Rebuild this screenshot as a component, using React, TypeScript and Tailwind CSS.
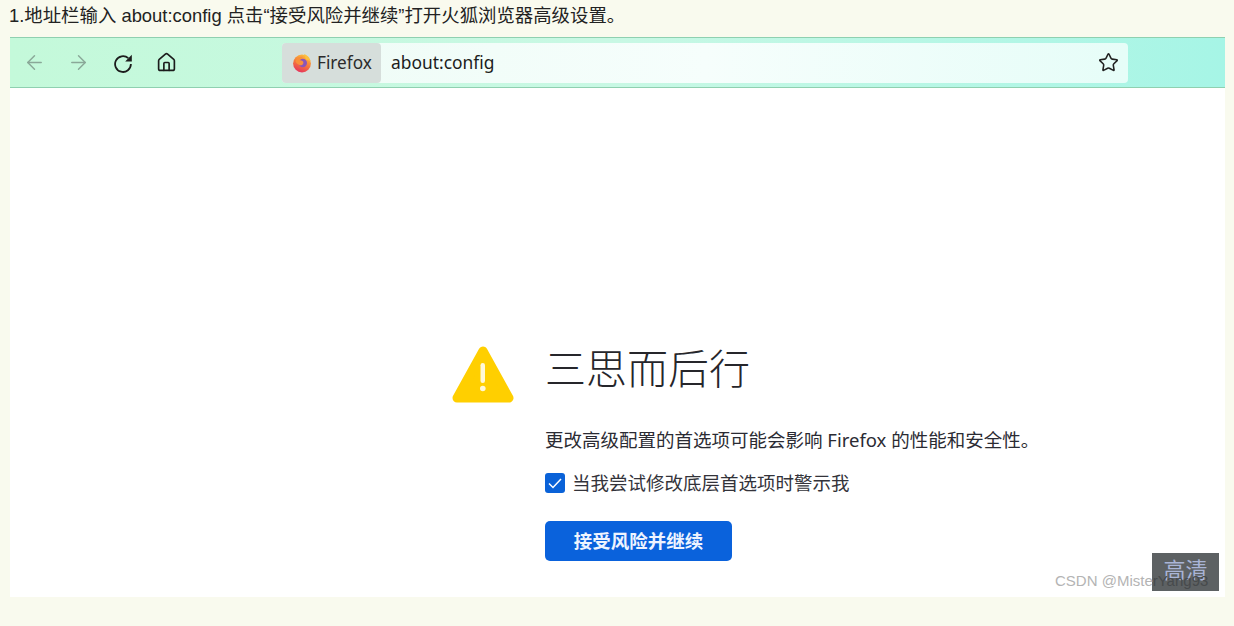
import { ArrowLeft, ArrowRight, Home, Star } from 'lucide-react';

function FirefoxLogo() {
    return (
        <svg width="20" height="20" viewBox="0 0 20 20">
            <defs>
                <linearGradient id="ffOuter" x1="0.7" y1="0" x2="0.3" y2="1">
                    <stop offset="0" stopColor="#fcc03f" />
                    <stop offset="0.5" stopColor="#f5793a" />
                    <stop offset="1" stopColor="#e5305f" />
                </linearGradient>
            </defs>
            <circle cx="10" cy="10.500" r="8.900" fill="url(#ffOuter)" />
            <path d="M12 1c3 1 5.500 3.500 6.500 7L14 6.500z" fill="#fcc03f" />
            <circle cx="10.800" cy="10" r="4.200" fill="#8a55b8" />
            <path d="M3.500 8c1.500-3.500 5-5 8-4-2 .6-3.200 1.800-3.400 3.200 2 0 3.500 1 3.300 2.800-.3 2-2.800 3-4.500 1.800C5.200 11 4 9.800 3.500 8z" fill="#f98f3a" />
        </svg>
    );
}

function ReloadIcon() {
    return (
        <svg width="20" height="20" viewBox="0 0 20 20" fill="none" className="ml-[23px]">
            <path d="M15.300 5.200 A7.900 7.900 0 1 0 17.900 11" stroke="#1c1c1c" strokeWidth="1.800" />
            <path d="M18.800 1.800 V8.400 H12.200 Z" fill="#1c1c1c" />
        </svg>
    );
}

export default function App() {
    return (
        <div className="relative w-[1234px] h-[626px] overflow-hidden bg-[#f9faee] font-['Liberation_Sans','Noto_Sans_CJK_SC',sans-serif]">
            <div className="h-[37px] pl-[9px] pt-[3px] text-[18.400px] leading-[26px] text-[#222222]">
                1.地址栏输入 about:config 点击“接受风险并继续”打开火狐浏览器高级设置。
            </div>

            <div className="ml-[10px] w-[1215px] h-[560px] flex flex-col bg-white font-['Noto_Sans','Noto_Sans_CJK_SC',sans-serif]">
                {/* Toolbar */}
                <div className="h-[51px] flex items-center border-y border-[#8fd0b0] bg-gradient-to-r from-[#c4f9da] via-[#c8f8e4] to-[#a6f5e6]">
                    <div className="w-[272px] flex items-center pl-[13px]">
                        <ArrowLeft size={23} strokeWidth={1.5} className="text-[#8aa898]" />
                        <ArrowRight size={23} strokeWidth={1.5} className="ml-[21px] text-[#8aa898]" />
                        <ReloadIcon />
                        <Home size={21} strokeWidth={1.9} className="ml-[23px] text-[#1c1c1c]" />
                    </div>
                    <div className="w-[846px] h-[40px] flex items-center rounded-[4px] bg-gradient-to-r from-[#eefcf6] via-[#f6fefc] to-[#e6fdf8]">
                        <div className="w-[99px] h-full flex items-center rounded-[4px] bg-[#d6dedb] pl-[10px]">
                            <FirefoxLogo />
                            <span className="ml-[5px] text-[17.200px] text-[#2b2b2b]">Firefox</span>
                        </div>
                        <span className="ml-[10px] text-[17.400px] text-[#1c1c1c]">about:config</span>
                        <Star size={21} strokeWidth={1.8} className="ml-auto mr-[9px] text-[#222222]" />
                    </div>
                </div>

                {/* Warning */}
                <div className="flex pl-[442px] pt-[257px]">
                    <svg width="62" height="58" viewBox="0 0 62 58" className="mt-[1px] shrink-0">
                        <path d="M31 5 L57 52 H5 Z" fill="#ffcf00" stroke="#ffcf00" strokeWidth="9" strokeLinejoin="round" />
                        <rect x="28.500" y="17" width="4.500" height="20" rx="2.200" fill="#fff8d8" />
                        <circle cx="30.800" cy="42.500" r="2.800" fill="#fff8d8" />
                    </svg>
                    <div className="ml-[31px] flex flex-col items-start">
                        <h1 className="h-[56px] text-[41px] leading-[46px] font-light text-[#26262b]">三思而后行</h1>
                        <p className="mt-[26px] text-[18.500px] leading-[26px] text-[#2b2b33] whitespace-nowrap">
                            更改高级配置的首选项可能会影响 Firefox 的性能和安全性。
                        </p>
                        <div className="mt-[17px] flex items-center">
                            <span className="w-[20px] h-[20px] flex items-center justify-center rounded-[3px] bg-[#0a62d8]">
                                <svg width="16" height="16" viewBox="0 0 16 16" fill="none">
                                    <path d="M2 8.500 L6 12.500 L14 4" stroke="white" strokeWidth="1.500" />
                                </svg>
                            </span>
                            <span className="ml-[7px] text-[18.500px] leading-[26px] text-[#33333a]">当我尝试修改底层首选项时警示我</span>
                        </div>
                        <button className="mt-[25px] w-[187px] h-[40px] rounded-[5px] bg-[#0a62dc] text-[18.500px] font-bold text-[#eef4ff]">
                            接受风险并继续
                        </button>
                    </div>
                </div>
            </div>

            {/* Watermarks */}
            <div className="absolute left-[1152px] top-[553px] w-[67px] h-[38px] flex items-center justify-center pb-[3px] bg-[#5d6163] text-[22px] text-[#a9b4d6]">
                高清
            </div>
            <span className="absolute left-[1055px] top-[571px] text-[15px] leading-[20px] text-[#b4b4b4] whitespace-nowrap">
                CSDN @Miste<span className="text-[#474a4c]">rYang93</span>
            </span>
        </div>
    );
}
